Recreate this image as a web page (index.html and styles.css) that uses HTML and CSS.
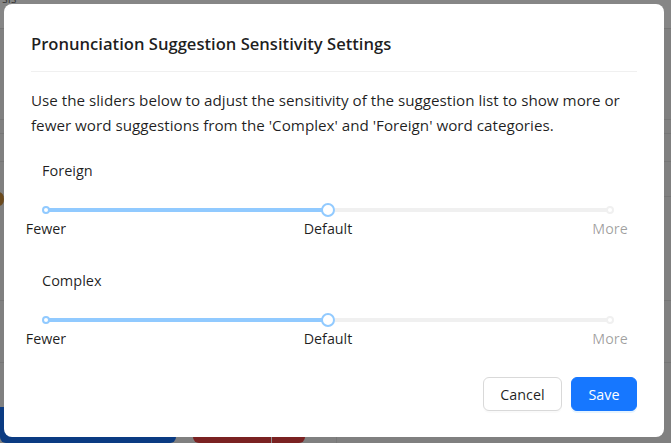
FILE: index.html
```html
<!DOCTYPE html>
<html lang="en">
<head>
<meta charset="UTF-8">
<title>Sensitivity Settings</title>
<link rel="stylesheet" href="styles.css">
</head>
<body>
<!-- page behind the mask -->
<div class="page">
  <div class="row head"><span class="crumb">sis</span></div>
  <div class="row" style="height:90px"></div>
  <div class="row" style="height:13px"></div>
  <div class="row" style="height:27px"></div>
  <div class="row" style="height:34px"><span class="dot"></span></div>
  <div class="row" style="height:103px"></div>
  <div class="row" style="height:61px"></div>
  <div class="toolbar">
    <div class="bg-btn blue"></div>
    <div class="bg-btn red"><span></span></div>
    <div class="bg-sep"></div>
  </div>
</div>

<div class="modal">
  <div class="modal-header">Pronunciation Suggestion Sensitivity Settings</div>
  <p class="intro">Use the sliders below to adjust the sensitivity of the suggestion list to show more or fewer word suggestions from the 'Complex' and 'Foreign' word categories.</p>

  <div class="setting">
    <div class="setting-label">Foreign</div>
    <div class="slider">
      <div class="rail"><div class="track" style="width:50%"></div></div>
      <span class="mark-dot active" style="left:0%"></span>
      <span class="mark-dot" style="left:100%"></span>
      <span class="handle" style="left:50%"></span>
      <span class="mark-text active" style="left:0%">Fewer</span>
      <span class="mark-text active" style="left:50%">Default</span>
      <span class="mark-text" style="left:100%">More</span>
    </div>
  </div>

  <div class="setting">
    <div class="setting-label">Complex</div>
    <div class="slider">
      <div class="rail"><div class="track" style="width:50%"></div></div>
      <span class="mark-dot active" style="left:0%"></span>
      <span class="mark-dot" style="left:100%"></span>
      <span class="handle" style="left:50%"></span>
      <span class="mark-text active" style="left:0%">Fewer</span>
      <span class="mark-text active" style="left:50%">Default</span>
      <span class="mark-text" style="left:100%">More</span>
    </div>
  </div>

  <div class="modal-footer">
    <button class="btn">Cancel</button>
    <button class="btn primary">Save</button>
  </div>
</div>
</body>
</html>
```

FILE: styles.css
```css
body {
    margin: 0;
    height: 443px;
    overflow: hidden;
    background: #808080;
    font-family: 'Open Sans', 'Noto Sans', sans-serif;
    position: relative;
}
.page {
    display: flex;
    flex-direction: column;
    height: 443px;
}
.row {
    border-bottom: 1px solid #767676;
    position: relative;
}
.row.head {
    height: 28px;
    background: #868686;
}
.crumb {
    position: absolute;
    left: 2px;
    top: -10px;
    font-size: 12px;
    color: #3a3a3a;
}
.dot {
    position: absolute;
    left: -6px;
    top: 30px;
    width: 10px;
    height: 14px;
    border-radius: 50%;
    background: #6b4a1e;
}
.toolbar {
    flex: 1;
    display: flex;
    align-items: flex-end;
    gap: 17px;
}
.bg-btn {
    height: 36px;
    border-radius: 0 0 6px 6px;
}
.bg-btn.blue {
    width: 176px;
    background: #0b3b82;
}
.bg-btn.red {
    width: 112px;
    background: #7a2222;
    position: relative;
}
.bg-btn.red span {
    position: absolute;
    left: 78px;
    top: 0;
    bottom: 0;
    border-left: 1px solid #8e8e8e;
}
.bg-sep {
    height: 30px;
    border-left: 1px solid #777;
    margin-left: 14px;
}

/* modal */
.modal {
    position: absolute;
    left: 4px;
    top: 4px;
    width: 660px;
    height: 433px;
    box-sizing: border-box;
    padding: 28px 27px 26px;
    background: #fff;
    border-radius: 8px;
    color: rgba(0, 0, 0, 0.88);
    display: flex;
    flex-direction: column;
}
.modal-header {
    font-size: 16.6px;
    font-weight: 600;
    line-height: 24px;
    padding-bottom: 15px;
    border-bottom: 1px solid #f0f0f0;
}
.intro {
    margin: 16px 0 0;
    font-size: 15.2px;
    line-height: 25px;
}
.setting {
    margin-top: 22px;
}
.setting + .setting {
    margin-top: 29px;
}
.setting-label {
    padding-left: 11px;
    font-size: 14.5px;
    line-height: 22px;
}
.slider {
    position: relative;
    margin: 26px 27px 0 15px;
    height: 33px;
}
.rail {
    height: 4px;
    border-radius: 2px;
    background: #f0f0f0;
}
.track {
    height: 4px;
    border-radius: 2px;
    background: #91caff;
}
.mark-dot {
    position: absolute;
    top: -2px;
    width: 8px;
    height: 8px;
    box-sizing: border-box;
    margin-left: -4px;
    border: 2px solid #f0f0f0;
    border-radius: 50%;
    background: #fff;
}
.mark-dot.active {
    border-color: #91caff;
}
.handle {
    position: absolute;
    top: -5px;
    width: 14px;
    height: 14px;
    box-sizing: border-box;
    margin-left: -7px;
    border: 2px solid #91caff;
    border-radius: 50%;
    background: #fff;
}
.mark-text {
    position: absolute;
    top: 11px;
    transform: translateX(-50%);
    font-size: 14.3px;
    line-height: 20px;
    color: rgba(0, 0, 0, 0.38);
    white-space: nowrap;
}
.mark-text.active {
    color: rgba(0, 0, 0, 0.88);
}
.modal-footer {
    margin-top: auto;
    display: flex;
    justify-content: flex-end;
    gap: 9px;
}
.btn {
    height: 34px;
    padding: 0 16.5px;
    font-family: inherit;
    font-size: 14.3px;
    color: rgba(0, 0, 0, 0.88);
    background: #fff;
    border: 1px solid #d9d9d9;
    border-radius: 6px;
    box-shadow: 0 2px 0 rgba(0, 0, 0, 0.02);
}
.btn.primary {
    color: #fff;
    background: #1677ff;
    border-color: #1677ff;
    box-shadow: 0 2px 0 rgba(5, 145, 255, 0.1);
}
```
